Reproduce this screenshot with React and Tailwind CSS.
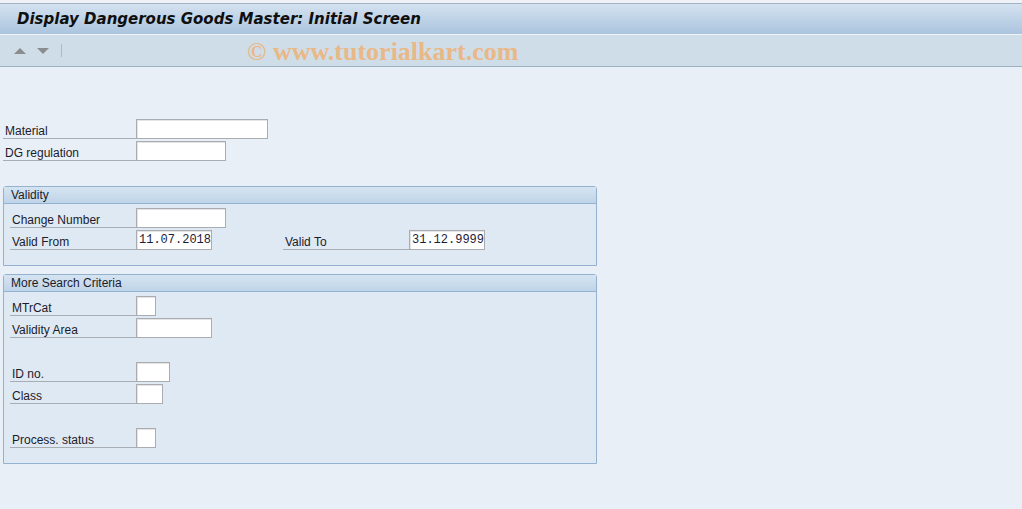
import React from "react";

const font = { fontFamily: '"Liberation Sans", Arial, sans-serif' };

function Input({ w, value }) {
  return (
    <div
      className={`h-[20px] ${w} bg-white border border-[#a9adb1] shadow-[inset_1px_1px_0_#e4e4e4] flex items-center px-[2px] text-[12px] text-[#1c1c3a] leading-none`}
      style={{ fontFamily: '"Liberation Mono", "Courier New", monospace' }}
    >
      {value}
    </div>
  );
}

function Row({ label, labelW, inputW, value, children }) {
  return (
    <div className="flex h-[20px] items-stretch">
      <div
        className={`${labelW} border-b border-[#a7adb3] flex items-end pl-[2px] pb-[1px] text-[12px] text-[#1b1b2b] leading-none`}
      >
        {label}
      </div>
      <Input w={inputW} value={value} />
      {children}
    </div>
  );
}

function Group({ title, children, pb }) {
  return (
    <div className="w-[594px] ml-[3px] border border-[#94b1cf] rounded-t-[3px] bg-[#dfe9f3]">
      <div className="h-[17px] bg-gradient-to-b from-[#d6e4f1] to-[#bfd4e8] border-b border-[#94b1cf] flex items-center pl-[7px] text-[12px] text-[#1b1b2b] leading-none">
        {title}
      </div>
      <div className={`pt-[4px] ${pb} pl-[6px] flex flex-col gap-[2px]`}>{children}</div>
    </div>
  );
}

export default function App() {
  return (
    <div className="w-[1022px] h-[509px] bg-[#e9eff6] flex flex-col overflow-hidden" style={font}>
      <div className="h-[3px] bg-[#eef2f7]" />
      <div className="h-[1px] bg-[#a4b3c4]" />
      <div className="h-[30px] bg-gradient-to-b from-[#d4e2f0] to-[#abc4de] flex items-center pl-[17px]">
        <span
          className="text-[15px] font-bold italic text-[#0f0f0f] leading-none"
          style={{ fontFamily: '"DejaVu Sans", Verdana, sans-serif' }}
        >
          Display Dangerous Goods Master: Initial Screen
        </span>
      </div>
      <div className="h-[1px] bg-[#eef3f8]" />
      <div className="h-[32px] bg-[#cfdde8] border-b border-[#9eb0c2] flex items-center">
        <svg width="12" height="6" className="ml-[14px]" viewBox="0 0 12 6">
          <polygon points="0,6 6,0 12,6" fill="#8c8c8c" />
        </svg>
        <svg width="12" height="6" className="ml-[11px]" viewBox="0 0 12 6">
          <polygon points="0,0 12,0 6,6" fill="#8c8c8c" />
        </svg>
        <div className="ml-[12px] w-[1px] h-[13px] bg-[#a9bccf]" />
        <span
          className="ml-[185px] mt-[3px] text-[26px] font-bold text-[#e9b887] leading-none"
          style={{ fontFamily: '"Liberation Serif", "Times New Roman", serif' }}
        >
          © www.tutorialkart.com
        </span>
      </div>

      <div className="mt-[52px] ml-[3px] flex flex-col gap-[2px]">
        <Row label="Material" labelW="w-[133px]" inputW="w-[132px]" />
        <Row label="DG regulation" labelW="w-[133px]" inputW="w-[90px]" />
      </div>

      <div className="mt-[25px]">
        <Group title="Validity" pb="pb-[15px]">
          <Row label="Change Number" labelW="w-[126px]" inputW="w-[90px]" />
          <Row label="Valid From" labelW="w-[126px]" inputW="w-[76px]" value="11.07.2018">
            <div className="ml-[71px] w-[126px] border-b border-[#a7adb3] flex items-end pl-[2px] pb-[1px] text-[12px] text-[#1b1b2b] leading-none">
              Valid To
            </div>
            <Input w="w-[76px]" value="31.12.9999" />
          </Row>
        </Group>
      </div>

      <div className="mt-[8px]">
        <Group title="More Search Criteria" pb="pb-[15px]">
          <Row label="MTrCat" labelW="w-[126px]" inputW="w-[20px]" />
          <Row label="Validity Area" labelW="w-[126px]" inputW="w-[76px]" />
          <div className="h-[20px]" />
          <Row label="ID no." labelW="w-[126px]" inputW="w-[34px]" />
          <Row label="Class" labelW="w-[126px]" inputW="w-[27px]" />
          <div className="h-[20px]" />
          <Row label="Process. status" labelW="w-[126px]" inputW="w-[20px]" />
        </Group>
      </div>
    </div>
  );
}
